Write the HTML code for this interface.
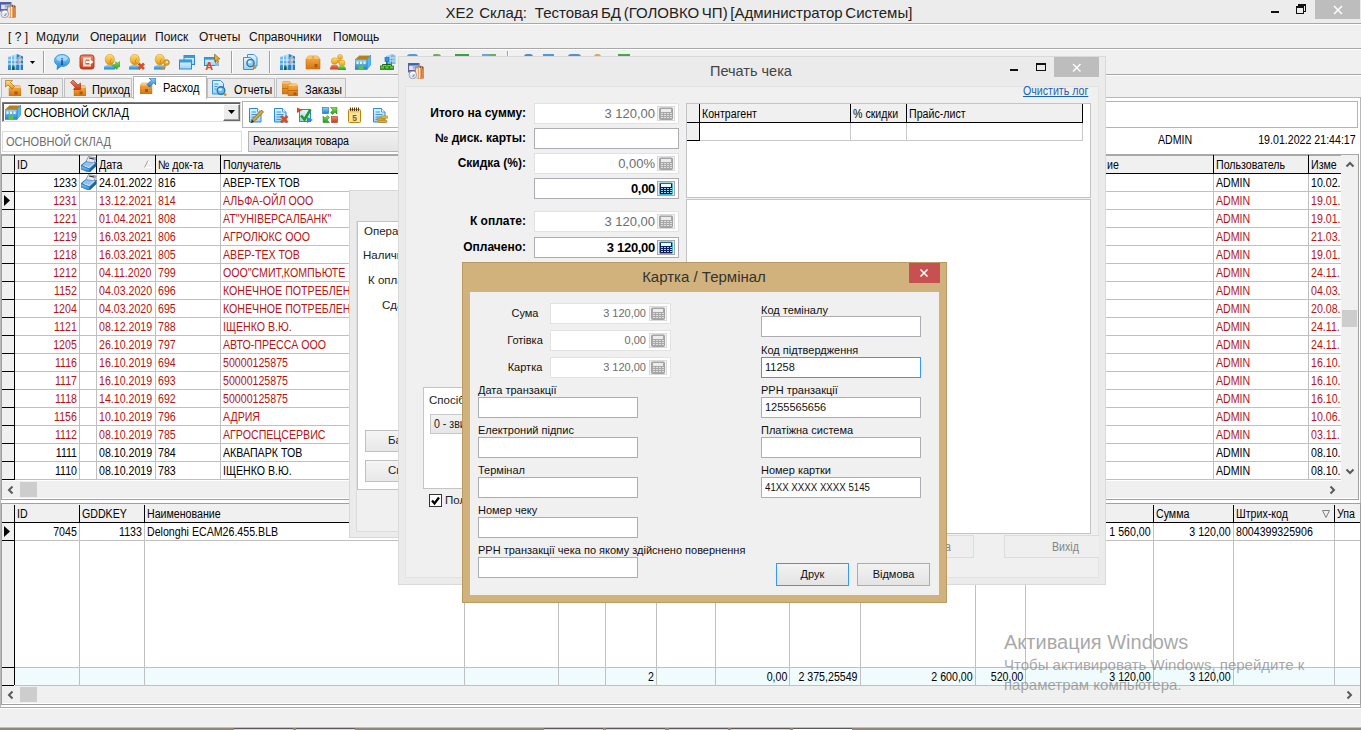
<!DOCTYPE html><html><head><meta charset="utf-8"><title>XE2 Склад</title><style>
*{box-sizing:border-box;margin:0;padding:0}
html,body{width:1361px;height:730px;overflow:hidden;background:#f0f0f0}
body{position:relative;font-family:"Liberation Sans",sans-serif;font-size:12px;color:#000}
.a{position:absolute}
.t{position:absolute;white-space:nowrap;line-height:1}
.g{font-size:12.5px;transform:scaleX(.85);transform-origin:0 50%}
.gr{font-size:12.5px;transform:scaleX(.85);transform-origin:100% 50%;text-align:right}
.red{color:#b41414}
.hl{position:absolute;height:1px}
.vl{position:absolute;width:1px}
.tah{font-size:11px}
.fld{position:absolute;background:#fff;border:1px solid #abadb3}
.fldd{position:absolute;background:#fff;border:1px solid #e3e3e3}
.btn{position:absolute;border:1px solid #acacac;background:linear-gradient(#f2f2f2,#e4e4e4);text-align:center}
</style></head><body>
<svg width="0" height="0" style="position:absolute"><defs><linearGradient id="gB" x1="0" y1="0" x2="0" y2="1"><stop offset="0" stop-color="#8fd2fa"/><stop offset="1" stop-color="#1f7fd0"/></linearGradient><linearGradient id="gL" x1="0" y1="0" x2="0" y2="1"><stop offset="0" stop-color="#e8f6ff"/><stop offset="1" stop-color="#9ad2f6"/></linearGradient><linearGradient id="gO" x1="0" y1="0" x2="0" y2="1"><stop offset="0" stop-color="#f6b04a"/><stop offset="1" stop-color="#d87410"/></linearGradient><linearGradient id="gY" x1="0" y1="0" x2="0" y2="1"><stop offset="0" stop-color="#ffe070"/><stop offset="1" stop-color="#e89a18"/></linearGradient><linearGradient id="gR" x1="0" y1="0" x2="0" y2="1"><stop offset="0" stop-color="#f08a68"/><stop offset="1" stop-color="#c83a1a"/></linearGradient><linearGradient id="gG" x1="0" y1="0" x2="0" y2="1"><stop offset="0" stop-color="#8ade5a"/><stop offset="1" stop-color="#2a9a1a"/></linearGradient></defs></svg>
<div class="a" style="left:0px;top:0px;width:1361px;height:23px;background:#ececec"></div>
<svg class="a" style="left:0px;top:2px" width="16" height="16" viewBox="0 0 16 16"><rect x=".5" y=".5" width="10.500" height="8.500" fill="#b8c4ec" stroke="#5462a8"/><rect x="1" y="1" width="9.500" height="1.500" fill="#4a5cb0"/><rect x="1.500" y="3" width="3" height="5" fill="#e8e4f4"/><rect x="5.500" y="2.500" width="4" height="2.500" fill="#7ac0d8"/><rect x="1" y="7" width="6" height="1.500" fill="#7a5a88"/><path d="M7.500 4.500l5-1.500 3.500 1.500v10.500l-4 1-4.500-1.500z" fill="#e89858" stroke="#a86430" stroke-width=".5"/><path d="M9 5.500v9.500" stroke="#fdeee0" stroke-width="1.600"/><path d="M11.500 5v10.500" stroke="#fff4ea" stroke-width="1.200"/><path d="M13.800 5.500v9.500" stroke="#c87838" stroke-width="1.200"/><path d="M12.500 3v2M14.500 3.500v2" stroke="#504038" stroke-width=".8"/><circle cx="4.800" cy="12" r="3.800" fill="#e4e8ee" stroke="#9098a8" stroke-width=".8"/><path d="M2.500 11q2-2.500 4.500-1" stroke="#fff" stroke-width="1.400" fill="none"/><path d="M4.500 14l2-2.500" stroke="#5a8ad0" stroke-width="1.200"/></svg>
<div class="t " style="left:445px;top:5px;font-size:15px;color:#222;width:468px;text-align:center;white-space:pre;word-spacing:-1.5px">XE2  Склад:   Тестовая БД (ГОЛОВКО ЧП) [Администратор Системы]</div>
<div class="a" style="left:1271px;top:11px;width:8px;height:2px;background:#111"></div>
<div class="a" style="left:1298px;top:4px;width:8px;height:8px;border:1px solid #111;border-top-width:2px"></div>
<div class="a" style="left:1296px;top:6px;width:8px;height:8px;border:1px solid #111;border-top-width:2px;background:#ececec"></div>
<div class="a" style="left:1315px;top:0px;width:45px;height:19px;background:#bdbdbd"></div>
<svg class="a" style="left:1331px;top:3px" width="14" height="14" viewBox="0 0 14 14"><path d="M3 3l8 8M11 3l-8 8" stroke="#fff" stroke-width="1.500"/></svg>
<div class="hl" style="left:0px;top:23px;width:1361px;background:#a8a8a8;height:1px"></div>
<div class="hl" style="left:0px;top:24px;width:1361px;background:#fff;height:1px"></div>
<div class="a" style="left:0px;top:25px;width:1361px;height:23px;background:#f0f0f0"></div>
<div class="t " style="left:8px;top:31px;font-size:12px;color:#111">[ ? ]</div>
<div class="t " style="left:36px;top:31px;font-size:12px;color:#111">Модули</div>
<div class="t " style="left:90px;top:31px;font-size:12px;color:#111">Операции</div>
<div class="t " style="left:155px;top:31px;font-size:12px;color:#111">Поиск</div>
<div class="t " style="left:199px;top:31px;font-size:12px;color:#111">Отчеты</div>
<div class="t " style="left:249px;top:31px;font-size:12px;color:#111">Справочники</div>
<div class="t " style="left:333px;top:31px;font-size:12px;color:#111">Помощь</div>
<div class="hl" style="left:0px;top:48px;width:1361px;background:#a8a8a8;height:1px"></div>
<div class="hl" style="left:0px;top:49px;width:1361px;background:#fff;height:1px"></div>
<div class="a" style="left:0px;top:50px;width:1361px;height:24px;background:#f0f0f0"></div>
<svg class="a" style="left:8px;top:54px" width="16" height="16" viewBox="0 0 16 16"><path d="M0 3L9 0v16H0z" fill="url(#gB)"/><path d="M9 0l6 2.500V16H9z" fill="#2a7cc4"/><path d="M3.500 1.800v14M7 .8v15M0 6h15M0 10h15M12 1.500V16" stroke="#e4f4ff" stroke-width="1.100"/><path d="M9.500 3h2v2.500h-2zM9.500 7h2v2.500h-2zM12.800 4h1.500v1.800h-1.500z" fill="#f09a78"/><rect x="4.200" y="12.500" width="2.400" height="3.500" fill="#1a5a30"/></svg>
<svg class="a" style="left:30px;top:61px" width="5" height="3" viewBox="0 0 5 3"><path d="M0 0h5L2.500 3z" fill="#000"/></svg>
<div class="vl" style="left:43px;top:51px;height:22px;background:#a0a0a0;width:1px"></div>
<div class="vl" style="left:44px;top:51px;height:22px;background:#fff;width:1px"></div>
<svg class="a" style="left:54px;top:54px" width="16" height="16" viewBox="0 0 16 16"><path d="M8 .5C3.500 .5 .5 3.200 .5 6.500c0 2 1.200 3.800 3 4.800L3 15.500l4-3.200c.3 0 .7.100 1 .1 4.500 0 7.500-2.700 7.500-6S12.500.5 8 .5z" fill="url(#gB)" stroke="#2a8ad8" stroke-width=".8"/><ellipse cx="8" cy="4.500" rx="5.500" ry="3" fill="#c8ecff" opacity=".6"/><text x="8" y="10.600" font-family="Liberation Serif,serif" font-size="10.500" font-weight="bold" fill="#0f4fa0" text-anchor="middle">i</text></svg>
<svg class="a" style="left:79px;top:54px" width="16" height="16" viewBox="0 0 16 16"><rect x="1" y="1" width="14" height="14" rx="2.500" fill="url(#gR)" stroke="#b03a1c" stroke-width="1"/><path d="M4 3.500h8v2H6.500v5H12v2H4z" fill="#fbe4da"/><path d="M7 7h3.500V5l4 3-4 3V9H7z" fill="#fff"/></svg>
<svg class="a" style="left:104px;top:54px" width="16" height="16" viewBox="0 0 16 16"><path d="M0 15.500v-3l3-1.500h5l3 1.500v3z" fill="url(#gB)"/><ellipse cx="5.800" cy="5.500" rx="4.600" ry="5.300" fill="url(#gY)" stroke="#c88a10" stroke-width=".5"/><path d="M6.800 5l1.200.3M6.500 6v1.800l-.8.200M5.800 9.200h1.600" stroke="#b87a18" stroke-width=".6" fill="none"/><path d="M2 8q3.500 3 7.500 0q-1 3-3.700 3T2 8z" fill="#e08a10" opacity=".5"/><path d="M16 7.500l-2.500 1.500-2-1.200.3 2.200-4.300 1 5.500 4.500 .5-2 2.500-1z" fill="url(#gG)" stroke="#2a8a1a" stroke-width=".4"/></svg>
<svg class="a" style="left:129px;top:54px" width="16" height="16" viewBox="0 0 16 16"><path d="M0 15.500v-3l3-1.500h5l3 1.500v3z" fill="url(#gB)"/><ellipse cx="5.800" cy="5.500" rx="4.600" ry="5.300" fill="url(#gY)" stroke="#c88a10" stroke-width=".5"/><path d="M6.800 5l1.200.3M6.500 6v1.800l-.8.200M5.800 9.200h1.600" stroke="#b87a18" stroke-width=".6" fill="none"/><path d="M2 8q3.500 3 7.500 0q-1 3-3.700 3T2 8z" fill="#e08a10" opacity=".5"/><path d="M9.500 9.500l5.500 5.500M15 9.500l-5.500 5.500" stroke="#d4502c" stroke-width="2.600"/></svg>
<svg class="a" style="left:154px;top:54px" width="16" height="16" viewBox="0 0 16 16"><path d="M0 15.500v-3l3-1.500h5l3 1.500v3z" fill="url(#gB)"/><ellipse cx="5.800" cy="5.500" rx="4.600" ry="5.300" fill="url(#gY)" stroke="#c88a10" stroke-width=".5"/><path d="M6.800 5l1.200.3M6.500 6v1.800l-.8.200M5.800 9.200h1.600" stroke="#b87a18" stroke-width=".6" fill="none"/><path d="M2 8q3.500 3 7.500 0q-1 3-3.700 3T2 8z" fill="#e08a10" opacity=".5"/><circle cx="12.500" cy="8.500" r="2.800" fill="#e8b040" stroke="#a87810" stroke-width=".8"/><circle cx="13" cy="8" r=".9" fill="#f0f0f0"/><path d="M11 10.500l-4.500 4.500h2.500l1-1.200 1 .2.500-1.500z" fill="#d8a030" stroke="#a87810" stroke-width=".5"/></svg>
<svg class="a" style="left:179px;top:54px" width="16" height="16" viewBox="0 0 16 16"><rect x="5" y="1.500" width="10.500" height="9" fill="url(#gL)" stroke="#2a8ad8"/><rect x="5" y="1.500" width="10.500" height="2.500" fill="#3a9ae0"/><rect x=".5" y="6" width="12" height="9" fill="url(#gL)" stroke="#2a8ad8"/><rect x=".5" y="6" width="12" height="2.500" fill="#3a9ae0"/></svg>
<svg class="a" style="left:204px;top:54px" width="16" height="16" viewBox="0 0 16 16"><rect x=".5" y="3.500" width="11" height="8" fill="url(#gL)" stroke="#2a8ad8"/><rect x=".5" y="3.500" width="11" height="2.200" fill="#3a9ae0"/><path d="M11 9h4v3h-4z" fill="#7cc0f0"/><text x="5.200" y="16" font-family="Liberation Sans,sans-serif" font-size="11" font-weight="bold" fill="#d04a28" text-anchor="middle">A</text><path d="M10.500 0l5.500 5-2.500.2 1.200 2.800-1.500.7-1.300-2.900-1.400 1.700z" fill="#e8b030" stroke="#7a5a0c" stroke-width=".6"/></svg>
<div class="vl" style="left:231px;top:51px;height:22px;background:#a0a0a0;width:1px"></div>
<div class="vl" style="left:232px;top:51px;height:22px;background:#fff;width:1px"></div>
<svg class="a" style="left:242px;top:54px" width="16" height="16" viewBox="0 0 16 16"><path d="M5.500 .5h6.500l3 3V12h-9.500z" fill="url(#gL)" stroke="#3a94d4"/><path d="M1.500 3.500h7l3 3v9h-10z" fill="url(#gL)" stroke="#3a94d4"/><circle cx="8.500" cy="9" r="3.600" fill="#8ccaf2" stroke="#2678b8" stroke-width="1.400"/><ellipse cx="7.800" cy="8" rx="1.800" ry="1.200" fill="#e0f4ff"/><path d="M11.300 11.800l2.500 2.500" stroke="#c89020" stroke-width="2.400"/></svg>
<div class="vl" style="left:269px;top:51px;height:22px;background:#a0a0a0;width:1px"></div>
<div class="vl" style="left:270px;top:51px;height:22px;background:#fff;width:1px"></div>
<svg class="a" style="left:280px;top:54px" width="16" height="16" viewBox="0 0 16 16"><path d="M0 3L9 0v16H0z" fill="url(#gB)"/><path d="M9 0l6 2.500V16H9z" fill="#2a7cc4"/><path d="M3.500 1.800v14M7 .8v15M0 6h15M0 10h15M12 1.500V16" stroke="#e4f4ff" stroke-width="1.100"/><path d="M9.500 3h2v2.500h-2zM9.500 7h2v2.500h-2zM12.800 4h1.500v1.800h-1.500z" fill="#f09a78"/><rect x="4.200" y="12.500" width="2.400" height="3.500" fill="#1a5a30"/></svg>
<svg class="a" style="left:305px;top:54px" width="16" height="16" viewBox="0 0 16 16"><path d="M1 5L3.500 2h9L15 5v10H1z" fill="url(#gO)" stroke="#b8680c" stroke-width=".5"/><path d="M1 5h14L12.500 2h-9z" fill="#f8c470"/><path d="M7 2L6.500 5v3h3V5L9 2z" fill="#e8a040" opacity=".7"/><rect x="9.500" y="10" width="3" height="3.500" fill="#a85a08"/></svg>
<svg class="a" style="left:330px;top:54px" width="16" height="16" viewBox="0 0 16 16"><circle cx="10" cy="3" r="2.500" fill="url(#gY)" stroke="#c88a10" stroke-width=".5"/><path d="M6.500 9q0-3.500 3.500-3.500t3.500 3.500z" fill="#e8a020"/><circle cx="4.500" cy="7" r="3.200" fill="url(#gY)" stroke="#c88a10" stroke-width=".5"/><path d="M0 15.500q0-5 4.500-5t4.500 5z" fill="url(#gR)"/><circle cx="12" cy="9" r="3" fill="url(#gY)" stroke="#c88a10" stroke-width=".5"/><path d="M8 16q0-4.500 4-4.500t4 4.500z" fill="url(#gG)"/></svg>
<svg class="a" style="left:355px;top:54px" width="16" height="16" viewBox="0 0 16 16"><path d="M0 5.500L5 1h11l-4 4.500z" fill="#b8801c"/><path d="M5 1h11l-1 1H4z" fill="#e8c060"/><path d="M12 5.500L16 1v9.500L12 15.500z" fill="#5ab8f0" stroke="#2a7ac0" stroke-width=".5"/><rect x="0" y="5.500" width="12" height="10" fill="url(#gB)" stroke="#2a7ac0" stroke-width=".5"/><path d="M1.500 7.500h2v2.500h-2zM5 7.500h2v2.500H5zM8.500 7.500h2v2.500h-2z" fill="#e6f6ff"/><rect x="3.500" y="11.500" width="5" height="4" fill="#58c838"/></svg>
<svg class="a" style="left:380px;top:54px" width="16" height="16" viewBox="0 0 16 16"><path d="M6 2l6-2v10H6z" fill="url(#gB)"/><path d="M12 0l3.500 1.500V10H12z" fill="#8ab8e0"/><path d="M8 1v9M10 .5V10M6 4h9.500M6 7h9.500" stroke="#e0f2ff" stroke-width=".8"/><rect x="5" y="3.500" width="4" height="4" fill="#3a90e0" stroke="#1a60b0" stroke-width=".6"/><path d="M7 7.500v3M2.500 12.500v-2h9v2M7 10.500v2" stroke="#1a6a1a" fill="none"/><rect x=".5" y="12" width="4" height="3.500" fill="url(#gG)" stroke="#1a7a10" stroke-width=".8"/><rect x="5" y="12" width="4" height="3.500" fill="url(#gG)" stroke="#1a7a10" stroke-width=".8"/><rect x="9.500" y="12" width="4" height="3.500" fill="url(#gG)" stroke="#1a7a10" stroke-width=".8"/></svg>
<div class="a" style="left:407px;top:54px;width:11px;height:3px;background:#3a8ad0;border-radius:5px 5px 0 0;opacity:.85"></div>
<div class="a" style="left:433px;top:54px;width:8px;height:3px;background:#4aa83a;border-radius:2px 4px 0 0;opacity:.85"></div>
<div class="a" style="left:455px;top:54px;width:14px;height:3px;border:2px solid #3aa040;border-bottom:none;background:#e8f8e0"></div>
<div class="a" style="left:482px;top:54px;width:14px;height:3px;background:linear-gradient(90deg,#4a9ad8 50%,#4aa848 50%);opacity:.85"></div>
<div class="vl" style="left:507px;top:51px;height:22px;background:#a0a0a0;width:1px"></div>
<div class="vl" style="left:508px;top:51px;height:22px;background:#fff;width:1px"></div>
<div class="a" style="left:524px;top:54px;width:9px;height:3px;background:#2a7ac8;border-radius:5px 5px 0 0;opacity:.85"></div>
<div class="a" style="left:543px;top:54px;width:11px;height:3px;border:2px solid #4a9ade;border-bottom:none;background:#e8f4fc"></div>
<div class="a" style="left:568px;top:54px;width:13px;height:3px;background:#3a80c0;border-radius:4px 4px 0 0;opacity:.85"></div>
<div class="a" style="left:594px;top:54px;width:7px;height:3px;background:#d8a020;border-radius:3px 3px 0 0;opacity:.85"></div>
<div class="a" style="left:618px;top:54px;width:12px;height:3px;background:#3a9a30;opacity:.9"></div>
<div class="hl" style="left:0px;top:74px;width:1361px;background:#a8a8a8;height:1px"></div>
<div class="hl" style="left:0px;top:75px;width:1361px;background:#fff;height:1px"></div>
<div class="a" style="left:0px;top:97px;width:1361px;height:610px;background:#fff;border:1px solid #b8b8b8;border-bottom:none"></div>
<div class="a" style="left:1px;top:78px;width:62px;height:20px;background:#ebebeb;border:1px solid #c0c0c0"></div>
<svg class="a" style="left:5px;top:80px" width="16" height="16" viewBox="0 0 16 16"><path d="M4 8L6 5.500h8.500L16 8v8H4z" fill="url(#gO)" stroke="#b8680c" stroke-width=".4"/><path d="M4 8h12l-1.500-2.500H6z" fill="#f8c878"/><rect x="9.500" y="11.500" width="3" height="3" fill="#a85a08"/><path d="M.5 .5h7L5.500 2.500l4 4-2.500 2.500-4-4-2.500 2z" fill="url(#gY)" stroke="#9a6008" stroke-width=".6"/></svg>
<div class="t g" style="left:28px;top:83px;font-size:13px">Товар</div>
<div class="a" style="left:64px;top:78px;width:68px;height:20px;background:#ebebeb;border:1px solid #c0c0c0"></div>
<svg class="a" style="left:70px;top:80px" width="16" height="16" viewBox="0 0 16 16"><path d="M4 8L6 5.500h8.500L16 8v8H4z" fill="url(#gO)" stroke="#b8680c" stroke-width=".4"/><path d="M4 8h12l-1.500-2.500H6z" fill="#f8c878"/><rect x="9.500" y="11.500" width="3" height="3" fill="#a85a08"/><path d="M10.500 9.500h-7L5.500 7.500l-5-5L3 0l5 5 2.500-2z" fill="url(#gR)" stroke="#a02a0a" stroke-width=".6"/></svg>
<div class="t g" style="left:92px;top:83px;font-size:13px">Приход</div>
<div class="a" style="left:207px;top:78px;width:68px;height:20px;background:#ebebeb;border:1px solid #c0c0c0"></div>
<svg class="a" style="left:211px;top:80px" width="16" height="16" viewBox="0 0 16 16"><path d="M1.500 .5h8l3 3V14h-11z" fill="url(#gL)" stroke="#3a94d4"/><path d="M3.500 4h4M3.500 6.500h3M3.500 9h2" stroke="#3a94d4" stroke-width="1"/><circle cx="10" cy="10.500" r="3.800" fill="#6cbcf0" stroke="#2678b8" stroke-width="1.400"/><ellipse cx="9.300" cy="9.500" rx="1.800" ry="1.200" fill="#e0f4ff"/><path d="M13 13.500l2 2" stroke="#c89020" stroke-width="2.400"/></svg>
<div class="t g" style="left:234px;top:83px;font-size:13px">Отчеты</div>
<div class="a" style="left:276px;top:78px;width:70px;height:20px;background:#ebebeb;border:1px solid #c0c0c0"></div>
<svg class="a" style="left:282px;top:80px" width="16" height="16" viewBox="0 0 16 16"><path d="M0 3.500L1.500 1.500h6L9 3.500V14H0z" fill="url(#gO)" stroke="#b8680c" stroke-width=".5"/><path d="M0 3.500h9L7.500 1.500h-6z" fill="#f8c878"/><path d="M0 8.500h9" stroke="#b8680c" stroke-width=".8"/><path d="M6 6L7.500 4h7L16 6v10H6z" fill="url(#gO)" stroke="#b8680c" stroke-width=".5"/><path d="M6 6h10l-1.500-2h-7z" fill="#f8c878"/><path d="M6 10.500h10" stroke="#b8680c" stroke-width=".8"/><rect x="11.500" y="12.500" width="3" height="2.500" fill="#a85a08"/></svg>
<div class="t g" style="left:305px;top:83px;font-size:13px">Заказы</div>
<div class="a" style="left:133px;top:76px;width:74px;height:23px;background:#fff;border:1px solid #b4b4b4;border-bottom:none"></div>
<svg class="a" style="left:140px;top:78px" width="16" height="16" viewBox="0 0 16 16"><path d="M0 7.500L2 5h8.500L12 7.500V16H0z" fill="url(#gO)" stroke="#b8680c" stroke-width=".4"/><path d="M0 7.500h12L10.500 5H2z" fill="#f8c878"/><rect x="5" y="11" width="3" height="3" fill="#a85a08"/><path d="M9 0h7v7l-2.200-2.200-4.300 4.300-2.500-2.500 4.300-4.300z" fill="url(#gB)" stroke="#1a5aa0" stroke-width=".6"/></svg>
<div class="t g" style="left:163px;top:81px;font-size:13px">Расход</div>
<div class="a" style="left:2px;top:102px;width:239px;height:20px;background:#fff;border:1px solid #7a7a7a;border-right-color:#e0e0e0;border-bottom-color:#e0e0e0;box-shadow:inset 1px 1px 0 #606060"></div>
<svg class="a" style="left:5px;top:104px" width="16" height="16" viewBox="0 0 16 16"><path d="M0 5.500L5 1h11l-4 4.500z" fill="#b8801c"/><path d="M5 1h11l-1 1H4z" fill="#e8c060"/><path d="M12 5.500L16 1v9.500L12 15.500z" fill="#5ab8f0" stroke="#2a7ac0" stroke-width=".5"/><rect x="0" y="5.500" width="12" height="10" fill="url(#gB)" stroke="#2a7ac0" stroke-width=".5"/><path d="M1.500 7.500h2v2.500h-2zM5 7.500h2v2.500H5zM8.500 7.500h2v2.500h-2z" fill="#e6f6ff"/><rect x="3.500" y="11.500" width="5" height="4" fill="#58c838"/></svg>
<div class="t g" style="left:24px;top:106px;font-size:13px">ОСНОВНОЙ СКЛАД</div>
<div class="a" style="left:223px;top:104px;width:17px;height:17px;background:#ececec;border:1px solid #fff;border-right-color:#6a6a6a;border-bottom-color:#6a6a6a;box-shadow:inset -1px -1px 0 #a0a0a0"></div>
<svg class="a" style="left:228px;top:110px" width="7" height="4" viewBox="0 0 7 4"><path d="M0 0h7L3.500 4z" fill="#000"/></svg>
<div class="a" style="left:242px;top:101px;width:1116px;height:27px;background:#fff;border:1px solid #b4b4b4"></div>
<svg class="a" style="left:248px;top:107px" width="16" height="16" viewBox="0 0 16 16"><path d="M1.500 1.500h8l3.500 3.500v10h-11.500z" fill="url(#gL)" stroke="#2a8ad8"/><path d="M9.500 1.500v3.500h3.500" fill="#fff" stroke="#2a8ad8" stroke-width=".8"/><path d="M3.500 5h4.500M3.500 7.500h7M3.500 10h7M3.500 12.500h5" stroke="#3a9ae0" stroke-width="1.100"/><path d="M3 16l1-3.500L13.500 3l2 2L6 14.500z" fill="#d8a838" stroke="#7a5a10" stroke-width=".7"/><path d="M3 16l1-3.500 2 2z" fill="#403020"/></svg>
<svg class="a" style="left:273px;top:107px" width="16" height="16" viewBox="0 0 16 16"><path d="M1.500 1.500h8l3.500 3.500v10h-11.500z" fill="url(#gL)" stroke="#2a8ad8"/><path d="M9.500 1.500v3.500h3.500" fill="#fff" stroke="#2a8ad8" stroke-width=".8"/><path d="M3.500 5h4.500M3.500 7.500h7M3.500 10h7M3.500 12.500h5" stroke="#3a9ae0" stroke-width="1.100"/><path d="M8 9l6.500 6.500M14.500 9L8 15.500" stroke="#d4502c" stroke-width="2.800"/></svg>
<svg class="a" style="left:297px;top:107px" width="16" height="16" viewBox="0 0 16 16"><rect x="2.500" y="2.500" width="11" height="12" fill="url(#gL)" stroke="#2a8ad8"/><path d="M4 8.500l3.500 4 6-10" stroke="#2a9a1a" stroke-width="2.600" fill="none"/><path d="M0 .5l5.500 2.500L0 6z" fill="#d8482a"/><path d="M10 10l6 3-6 3z" fill="#2a8ad8"/></svg>
<svg class="a" style="left:322px;top:107px" width="16" height="16" viewBox="0 0 16 16"><rect x=".5" y=".5" width="6" height="6" fill="url(#gB)" stroke="#1a6ab8" stroke-width=".6"/><rect x="9.500" y="9.500" width="6" height="6" fill="url(#gR)" stroke="#a83a1a" stroke-width=".6"/><path d="M8.500 .5H15V7l-2-2-2.500 2.500-2-2L11 3z" fill="url(#gG)" stroke="#1a7a10" stroke-width=".5"/><path d="M7.500 15.500H1V9l2 2 2.500-2.500 2 2L5 13z" fill="url(#gG)" stroke="#1a7a10" stroke-width=".5"/></svg>
<svg class="a" style="left:347px;top:107px" width="16" height="16" viewBox="0 0 16 16"><rect x="1.500" y="2.500" width="12" height="13" rx="1" fill="#f8e4a0" stroke="#b8860b"/><rect x="2.500" y="3.500" width="10" height="2" fill="#e8c860"/><path d="M3.500 .5v3.500M5.500 .5v3.500M7.500 .5v3.500M9.500 .5v3.500M11.500 .5v3.500" stroke="#5a3a0a" stroke-width="1"/><text x="7.600" y="13.600" font-family="Liberation Sans,sans-serif" font-size="8.500" font-weight="bold" fill="#8a5a0a" text-anchor="middle">5</text></svg>
<svg class="a" style="left:372px;top:107px" width="16" height="16" viewBox="0 0 16 16"><path d="M1.500 1.500h8l3.500 3.500v10h-11.500z" fill="url(#gL)" stroke="#2a8ad8"/><path d="M9.500 1.500v3.500h3.500" fill="#fff" stroke="#2a8ad8" stroke-width=".8"/><path d="M3.500 5h4.500M3.500 7.500h7M3.500 10h7M3.500 12.500h5" stroke="#3a9ae0" stroke-width="1.100"/><rect x="5" y="11" width="7" height="2.200" rx=".8" fill="#e8b030" stroke="#a87810" stroke-width=".6"/><rect x="9" y="9" width="7" height="2.200" rx=".8" fill="#f0c040" stroke="#a87810" stroke-width=".6"/><rect x="6" y="13.300" width="9" height="2.200" rx=".8" fill="#e8b030" stroke="#a87810" stroke-width=".6"/></svg>
<div class="a" style="left:2px;top:131px;width:240px;height:21px;background:#fff;border:1px solid #dcdcdc"></div>
<div class="t g" style="left:6px;top:135px;font-size:13px;color:#6d6d6d">ОСНОВНОЙ СКЛАД</div>
<div class="a" style="left:248px;top:131px;width:200px;height:21px;background:linear-gradient(#f0f0f0,#e4e4e4);border:1px solid #b4b4b4"></div>
<div class="t g" style="left:253px;top:135px;font-size:12.5px">Реализация товара</div>
<div class="t g" style="left:1158px;top:134px;">ADMIN</div>
<div class="t gr" style="right:5px;top:134px;">19.01.2022 21:44:17</div>
<div class="a" style="left:1px;top:154px;width:1358px;height:346px;background:#fff;border:1px solid #a0a0a0;border-top:2px solid #a8a8a8"></div>
<div class="a" style="left:2px;top:156px;width:1339px;height:17px;background:#f0f0f0"></div>
<div class="vl" style="left:14px;top:155px;height:18px;background:#000;width:1px"></div>
<div class="vl" style="left:14px;top:174px;height:306px;background:#c0c0c0;width:1px"></div>
<div class="vl" style="left:79px;top:155px;height:18px;background:#000;width:1px"></div>
<div class="vl" style="left:79px;top:174px;height:306px;background:#c0c0c0;width:1px"></div>
<div class="vl" style="left:96px;top:155px;height:18px;background:#000;width:1px"></div>
<div class="vl" style="left:96px;top:174px;height:306px;background:#c0c0c0;width:1px"></div>
<div class="vl" style="left:155px;top:155px;height:18px;background:#000;width:1px"></div>
<div class="vl" style="left:155px;top:174px;height:306px;background:#c0c0c0;width:1px"></div>
<div class="vl" style="left:220px;top:155px;height:18px;background:#000;width:1px"></div>
<div class="vl" style="left:220px;top:174px;height:306px;background:#c0c0c0;width:1px"></div>
<div class="vl" style="left:1213px;top:155px;height:18px;background:#000;width:1px"></div>
<div class="vl" style="left:1213px;top:174px;height:306px;background:#c0c0c0;width:1px"></div>
<div class="vl" style="left:1308px;top:155px;height:18px;background:#000;width:1px"></div>
<div class="vl" style="left:1308px;top:174px;height:306px;background:#c0c0c0;width:1px"></div>
<div class="hl" style="left:2px;top:173px;width:1339px;background:#000;height:1px"></div>
<div class="a" style="left:2px;top:174px;width:12px;height:306px;background:#f0f0f0"></div>
<div class="vl" style="left:14px;top:155px;height:325px;background:#000;width:1px"></div>
<div class="hl" style="left:15px;top:191px;width:1326px;background:#c0c0c0;height:1px"></div>
<div class="hl" style="left:2px;top:191px;width:12px;background:#000;height:1px"></div>
<div class="hl" style="left:15px;top:209px;width:1326px;background:#c0c0c0;height:1px"></div>
<div class="hl" style="left:2px;top:209px;width:12px;background:#000;height:1px"></div>
<div class="hl" style="left:15px;top:227px;width:1326px;background:#c0c0c0;height:1px"></div>
<div class="hl" style="left:2px;top:227px;width:12px;background:#000;height:1px"></div>
<div class="hl" style="left:15px;top:245px;width:1326px;background:#c0c0c0;height:1px"></div>
<div class="hl" style="left:2px;top:245px;width:12px;background:#000;height:1px"></div>
<div class="hl" style="left:15px;top:263px;width:1326px;background:#c0c0c0;height:1px"></div>
<div class="hl" style="left:2px;top:263px;width:12px;background:#000;height:1px"></div>
<div class="hl" style="left:15px;top:281px;width:1326px;background:#c0c0c0;height:1px"></div>
<div class="hl" style="left:2px;top:281px;width:12px;background:#000;height:1px"></div>
<div class="hl" style="left:15px;top:299px;width:1326px;background:#c0c0c0;height:1px"></div>
<div class="hl" style="left:2px;top:299px;width:12px;background:#000;height:1px"></div>
<div class="hl" style="left:15px;top:317px;width:1326px;background:#c0c0c0;height:1px"></div>
<div class="hl" style="left:2px;top:317px;width:12px;background:#000;height:1px"></div>
<div class="hl" style="left:15px;top:335px;width:1326px;background:#c0c0c0;height:1px"></div>
<div class="hl" style="left:2px;top:335px;width:12px;background:#000;height:1px"></div>
<div class="hl" style="left:15px;top:353px;width:1326px;background:#c0c0c0;height:1px"></div>
<div class="hl" style="left:2px;top:353px;width:12px;background:#000;height:1px"></div>
<div class="hl" style="left:15px;top:371px;width:1326px;background:#c0c0c0;height:1px"></div>
<div class="hl" style="left:2px;top:371px;width:12px;background:#000;height:1px"></div>
<div class="hl" style="left:15px;top:389px;width:1326px;background:#c0c0c0;height:1px"></div>
<div class="hl" style="left:2px;top:389px;width:12px;background:#000;height:1px"></div>
<div class="hl" style="left:15px;top:407px;width:1326px;background:#c0c0c0;height:1px"></div>
<div class="hl" style="left:2px;top:407px;width:12px;background:#000;height:1px"></div>
<div class="hl" style="left:15px;top:425px;width:1326px;background:#c0c0c0;height:1px"></div>
<div class="hl" style="left:2px;top:425px;width:12px;background:#000;height:1px"></div>
<div class="hl" style="left:15px;top:443px;width:1326px;background:#c0c0c0;height:1px"></div>
<div class="hl" style="left:2px;top:443px;width:12px;background:#000;height:1px"></div>
<div class="hl" style="left:15px;top:461px;width:1326px;background:#c0c0c0;height:1px"></div>
<div class="hl" style="left:2px;top:461px;width:12px;background:#000;height:1px"></div>
<div class="hl" style="left:15px;top:479px;width:1326px;background:#c0c0c0;height:1px"></div>
<div class="hl" style="left:2px;top:479px;width:12px;background:#000;height:1px"></div>
<svg class="a" style="left:4px;top:195px" width="7" height="11" viewBox="0 0 7 11"><path d="M0 0l6 5.500L0 11z" fill="#000"/></svg>
<div class="t g" style="left:17px;top:159px;">ID</div>
<svg class="a" style="left:81px;top:156px" width="16" height="16" viewBox="0 0 16 16"><path d="M0 9.500L6.500 4.500l9 2-7 6.500z" fill="#8cc4f0" stroke="#1a68b8" stroke-width=".9"/><path d="M0 9.500v3.500L8.500 16.500V13z" fill="url(#gB)" stroke="#1a68b8" stroke-width=".7"/><path d="M8.500 13L15.500 6.500v3.500L8.500 16.500z" fill="#1a60a8"/><path d="M5 5.500L7.500 .5l7.500 1.500-2 5z" fill="#e4eaf2" stroke="#6a7a90" stroke-width=".7"/><path d="M8 2l5.500 1.200" stroke="#334" stroke-width="1.200"/><path d="M3.500 10l4.500 1.500 5-4.500" stroke="#d8f0ff" stroke-width=".8" fill="none"/></svg>
<div class="t g" style="left:99px;top:159px;">Дата</div>
<div class="t g" style="left:158px;top:159px;">№ док-та</div>
<div class="t g" style="left:223px;top:159px;">Получатель</div>
<svg class="a" style="left:144px;top:160px" width="8" height="8" viewBox="0 0 8 8"><path d="M.5 7.500L4 .5l3.500 7z" fill="none" stroke="#fff"/><path d="M.5 7.500L4 .5" fill="none" stroke="#a0a0a0"/></svg>
<div class="t g" style="left:1107px;top:159px;">ие</div>
<div class="t g" style="left:1216px;top:159px;">Пользователь</div>
<div class="t g" style="left:1311px;top:159px;">Изме</div>
<div class="t gr" style="right:1284px;top:177px;">1233</div>
<div class="t g" style="left:99px;top:177px;">24.01.2022</div>
<div class="t g" style="left:158px;top:177px;">816</div>
<div class="t g" style="left:223px;top:177px;">АВЕР-ТЕХ ТОВ</div>
<div class="t g" style="left:1216px;top:177px;">ADMIN</div>
<div class="t g" style="left:1311px;top:177px;">10.02.</div>
<div class="t gr red" style="right:1284px;top:195px;">1231</div>
<div class="t g red" style="left:99px;top:195px;">13.12.2021</div>
<div class="t g red" style="left:158px;top:195px;">814</div>
<div class="t g red" style="left:223px;top:195px;">АЛЬФА-ОЙЛ ООО</div>
<div class="t g red" style="left:1216px;top:195px;">ADMIN</div>
<div class="t g red" style="left:1311px;top:195px;">19.01.</div>
<div class="t gr red" style="right:1284px;top:213px;">1221</div>
<div class="t g red" style="left:99px;top:213px;">01.04.2021</div>
<div class="t g red" style="left:158px;top:213px;">808</div>
<div class="t g red" style="left:223px;top:213px;">АТ"УНІВЕРСАЛБАНК"</div>
<div class="t g red" style="left:1216px;top:213px;">ADMIN</div>
<div class="t g red" style="left:1311px;top:213px;">19.01.</div>
<div class="t gr red" style="right:1284px;top:231px;">1219</div>
<div class="t g red" style="left:99px;top:231px;">16.03.2021</div>
<div class="t g red" style="left:158px;top:231px;">806</div>
<div class="t g red" style="left:223px;top:231px;">АГРОЛЮКС ООО</div>
<div class="t g red" style="left:1216px;top:231px;">ADMIN</div>
<div class="t g red" style="left:1311px;top:231px;">21.03.</div>
<div class="t gr red" style="right:1284px;top:249px;">1218</div>
<div class="t g red" style="left:99px;top:249px;">16.03.2021</div>
<div class="t g red" style="left:158px;top:249px;">805</div>
<div class="t g red" style="left:223px;top:249px;">АВЕР-ТЕХ ТОВ</div>
<div class="t g red" style="left:1216px;top:249px;">ADMIN</div>
<div class="t g red" style="left:1311px;top:249px;">19.01.</div>
<div class="t gr red" style="right:1284px;top:267px;">1212</div>
<div class="t g red" style="left:99px;top:267px;">04.11.2020</div>
<div class="t g red" style="left:158px;top:267px;">799</div>
<div class="t g red" style="left:223px;top:267px;">ООО"СМИТ,КОМПЬЮТЕ</div>
<div class="t g red" style="left:1216px;top:267px;">ADMIN</div>
<div class="t g red" style="left:1311px;top:267px;">24.11.</div>
<div class="t gr red" style="right:1284px;top:285px;">1152</div>
<div class="t g red" style="left:99px;top:285px;">04.03.2020</div>
<div class="t g red" style="left:158px;top:285px;">696</div>
<div class="t g red" style="left:223px;top:285px;">КОНЕЧНОЕ ПОТРЕБЛЕН</div>
<div class="t g red" style="left:1216px;top:285px;">ADMIN</div>
<div class="t g red" style="left:1311px;top:285px;">04.03.</div>
<div class="t gr red" style="right:1284px;top:303px;">1204</div>
<div class="t g red" style="left:99px;top:303px;">04.03.2020</div>
<div class="t g red" style="left:158px;top:303px;">695</div>
<div class="t g red" style="left:223px;top:303px;">КОНЕЧНОЕ ПОТРЕБЛЕН</div>
<div class="t g red" style="left:1216px;top:303px;">ADMIN</div>
<div class="t g red" style="left:1311px;top:303px;">20.08.</div>
<div class="t gr red" style="right:1284px;top:321px;">1121</div>
<div class="t g red" style="left:99px;top:321px;">08.12.2019</div>
<div class="t g red" style="left:158px;top:321px;">788</div>
<div class="t g red" style="left:223px;top:321px;">ІЩЕНКО В.Ю.</div>
<div class="t g red" style="left:1216px;top:321px;">ADMIN</div>
<div class="t g red" style="left:1311px;top:321px;">24.11.</div>
<div class="t gr red" style="right:1284px;top:339px;">1205</div>
<div class="t g red" style="left:99px;top:339px;">26.10.2019</div>
<div class="t g red" style="left:158px;top:339px;">797</div>
<div class="t g red" style="left:223px;top:339px;">АВТО-ПРЕССА ООО</div>
<div class="t g red" style="left:1216px;top:339px;">ADMIN</div>
<div class="t g red" style="left:1311px;top:339px;">24.11.</div>
<div class="t gr red" style="right:1284px;top:357px;">1116</div>
<div class="t g red" style="left:99px;top:357px;">16.10.2019</div>
<div class="t g red" style="left:158px;top:357px;">694</div>
<div class="t g red" style="left:223px;top:357px;">50000125875</div>
<div class="t g red" style="left:1216px;top:357px;">ADMIN</div>
<div class="t g red" style="left:1311px;top:357px;">16.10.</div>
<div class="t gr red" style="right:1284px;top:375px;">1117</div>
<div class="t g red" style="left:99px;top:375px;">16.10.2019</div>
<div class="t g red" style="left:158px;top:375px;">693</div>
<div class="t g red" style="left:223px;top:375px;">50000125875</div>
<div class="t g red" style="left:1216px;top:375px;">ADMIN</div>
<div class="t g red" style="left:1311px;top:375px;">16.10.</div>
<div class="t gr red" style="right:1284px;top:393px;">1118</div>
<div class="t g red" style="left:99px;top:393px;">14.10.2019</div>
<div class="t g red" style="left:158px;top:393px;">692</div>
<div class="t g red" style="left:223px;top:393px;">50000125875</div>
<div class="t g red" style="left:1216px;top:393px;">ADMIN</div>
<div class="t g red" style="left:1311px;top:393px;">16.10.</div>
<div class="t gr red" style="right:1284px;top:411px;">1156</div>
<div class="t g red" style="left:99px;top:411px;">10.10.2019</div>
<div class="t g red" style="left:158px;top:411px;">796</div>
<div class="t g red" style="left:223px;top:411px;">АДРИЯ</div>
<div class="t g red" style="left:1216px;top:411px;">ADMIN</div>
<div class="t g red" style="left:1311px;top:411px;">10.06.</div>
<div class="t gr red" style="right:1284px;top:429px;">1112</div>
<div class="t g red" style="left:99px;top:429px;">08.10.2019</div>
<div class="t g red" style="left:158px;top:429px;">785</div>
<div class="t g red" style="left:223px;top:429px;">АГРОСПЕЦСЕРВИС</div>
<div class="t g red" style="left:1216px;top:429px;">ADMIN</div>
<div class="t g red" style="left:1311px;top:429px;">03.11.</div>
<div class="t gr" style="right:1284px;top:447px;">1111</div>
<div class="t g" style="left:99px;top:447px;">08.10.2019</div>
<div class="t g" style="left:158px;top:447px;">784</div>
<div class="t g" style="left:223px;top:447px;">АКВАПАРК ТОВ</div>
<div class="t g" style="left:1216px;top:447px;">ADMIN</div>
<div class="t g" style="left:1311px;top:447px;">08.10.</div>
<div class="t gr" style="right:1284px;top:465px;">1110</div>
<div class="t g" style="left:99px;top:465px;">08.10.2019</div>
<div class="t g" style="left:158px;top:465px;">783</div>
<div class="t g" style="left:223px;top:465px;">ІЩЕНКО В.Ю.</div>
<div class="t g" style="left:1216px;top:465px;">ADMIN</div>
<div class="t g" style="left:1311px;top:465px;">08.10.</div>
<svg class="a" style="left:81px;top:174px" width="16" height="16" viewBox="0 0 16 16"><path d="M0 9.500L6.500 4.500l9 2-7 6.500z" fill="#8cc4f0" stroke="#1a68b8" stroke-width=".9"/><path d="M0 9.500v3.500L8.500 16.500V13z" fill="url(#gB)" stroke="#1a68b8" stroke-width=".7"/><path d="M8.500 13L15.500 6.500v3.500L8.500 16.500z" fill="#1a60a8"/><path d="M5 5.500L7.500 .5l7.500 1.500-2 5z" fill="#e4eaf2" stroke="#6a7a90" stroke-width=".7"/><path d="M8 2l5.500 1.200" stroke="#334" stroke-width="1.200"/><path d="M3.500 10l4.500 1.500 5-4.500" stroke="#d8f0ff" stroke-width=".8" fill="none"/></svg>
<div class="a" style="left:1341px;top:155px;width:17px;height:326px;background:#f0f0f0"></div>
<svg class="a" style="left:1345px;top:161px" width="10" height="8" viewBox="0 0 10 8"><path d="M1.500 5.500L5 2l3.500 3.500" stroke="#5a5a5a" stroke-width="2" fill="none"/></svg>
<svg class="a" style="left:1345px;top:467px" width="10" height="8" viewBox="0 0 10 8"><path d="M1.500 2.500L5 6l3.500-3.500" stroke="#5a5a5a" stroke-width="2" fill="none"/></svg>
<div class="a" style="left:1342px;top:310px;width:15px;height:17px;background:#cdcdcd"></div>
<div class="a" style="left:2px;top:481px;width:1339px;height:17px;background:#f0f0f0"></div>
<div class="a" style="left:1341px;top:481px;width:17px;height:17px;background:#f0f0f0"></div>
<svg class="a" style="left:7px;top:485px" width="8" height="10" viewBox="0 0 8 10"><path d="M5.500 1.500L2 5l3.500 3.500" stroke="#5a5a5a" stroke-width="2" fill="none"/></svg>
<svg class="a" style="left:1328px;top:485px" width="8" height="10" viewBox="0 0 8 10"><path d="M2.500 1.500L6 5l-3.500 3.500" stroke="#5a5a5a" stroke-width="2" fill="none"/></svg>
<div class="a" style="left:20px;top:482px;width:17px;height:15px;background:#cdcdcd"></div>
<div class="a" style="left:1px;top:503px;width:1360px;height:202px;background:#fff;border:1px solid #a0a0a0"></div>
<div class="a" style="left:2px;top:504px;width:1358px;height:18px;background:#f0f0f0"></div>
<div class="a" style="left:2px;top:668px;width:1358px;height:17px;background:#f0fbfd"></div>
<div class="vl" style="left:14px;top:505px;height:18px;background:#000;width:1px"></div>
<div class="vl" style="left:14px;top:523px;height:162px;background:#c0c0c0;width:1px"></div>
<div class="vl" style="left:79px;top:505px;height:18px;background:#000;width:1px"></div>
<div class="vl" style="left:79px;top:523px;height:162px;background:#c0c0c0;width:1px"></div>
<div class="vl" style="left:144px;top:505px;height:18px;background:#000;width:1px"></div>
<div class="vl" style="left:144px;top:523px;height:162px;background:#c0c0c0;width:1px"></div>
<div class="vl" style="left:464px;top:505px;height:18px;background:#000;width:1px"></div>
<div class="vl" style="left:464px;top:523px;height:162px;background:#c0c0c0;width:1px"></div>
<div class="vl" style="left:558px;top:505px;height:18px;background:#000;width:1px"></div>
<div class="vl" style="left:558px;top:523px;height:162px;background:#c0c0c0;width:1px"></div>
<div class="vl" style="left:605px;top:505px;height:18px;background:#000;width:1px"></div>
<div class="vl" style="left:605px;top:523px;height:162px;background:#c0c0c0;width:1px"></div>
<div class="vl" style="left:656px;top:505px;height:18px;background:#000;width:1px"></div>
<div class="vl" style="left:656px;top:523px;height:162px;background:#c0c0c0;width:1px"></div>
<div class="vl" style="left:715px;top:505px;height:18px;background:#000;width:1px"></div>
<div class="vl" style="left:715px;top:523px;height:162px;background:#c0c0c0;width:1px"></div>
<div class="vl" style="left:789px;top:505px;height:18px;background:#000;width:1px"></div>
<div class="vl" style="left:789px;top:523px;height:162px;background:#c0c0c0;width:1px"></div>
<div class="vl" style="left:860px;top:505px;height:18px;background:#000;width:1px"></div>
<div class="vl" style="left:860px;top:523px;height:162px;background:#c0c0c0;width:1px"></div>
<div class="vl" style="left:975px;top:505px;height:18px;background:#000;width:1px"></div>
<div class="vl" style="left:975px;top:523px;height:162px;background:#c0c0c0;width:1px"></div>
<div class="vl" style="left:1025px;top:505px;height:18px;background:#000;width:1px"></div>
<div class="vl" style="left:1025px;top:523px;height:162px;background:#c0c0c0;width:1px"></div>
<div class="vl" style="left:1153px;top:505px;height:18px;background:#000;width:1px"></div>
<div class="vl" style="left:1153px;top:523px;height:162px;background:#c0c0c0;width:1px"></div>
<div class="vl" style="left:1233px;top:505px;height:18px;background:#000;width:1px"></div>
<div class="vl" style="left:1233px;top:523px;height:162px;background:#c0c0c0;width:1px"></div>
<div class="vl" style="left:1334px;top:505px;height:18px;background:#000;width:1px"></div>
<div class="vl" style="left:1334px;top:523px;height:162px;background:#c0c0c0;width:1px"></div>
<div class="hl" style="left:2px;top:522px;width:1358px;background:#000;height:1px"></div>
<div class="a" style="left:2px;top:523px;width:12px;height:162px;background:#f0f0f0"></div>
<div class="vl" style="left:14px;top:505px;height:180px;background:#000;width:1px"></div>
<div class="hl" style="left:2px;top:540px;width:12px;background:#000;height:1px"></div>
<div class="hl" style="left:15px;top:540px;width:1345px;background:#c0c0c0;height:1px"></div>
<div class="hl" style="left:2px;top:667px;width:12px;background:#000;height:1px"></div>
<div class="hl" style="left:15px;top:667px;width:1345px;background:#c0c0c0;height:1px"></div>
<div class="hl" style="left:2px;top:685px;width:12px;background:#000;height:1px"></div>
<div class="hl" style="left:15px;top:685px;width:1345px;background:#c0c0c0;height:1px"></div>
<svg class="a" style="left:4px;top:526px" width="7" height="11" viewBox="0 0 7 11"><path d="M0 0l6 5.500L0 11z" fill="#000"/></svg>
<div class="t g" style="left:17px;top:508px;">ID</div>
<div class="t g" style="left:82px;top:508px;">GDDKEY</div>
<div class="t g" style="left:147px;top:508px;">Наименование</div>
<div class="t g" style="left:1156px;top:508px;">Сумма</div>
<div class="t g" style="left:1236px;top:508px;">Штрих-код</div>
<div class="t g" style="left:1337px;top:508px;">Упа</div>
<svg class="a" style="left:1322px;top:510px" width="8" height="8" viewBox="0 0 8 8"><path d="M.5 .5h7L4 7.500z" fill="none" stroke="#808080"/></svg>
<div class="t gr" style="right:1284px;top:526px;">7045</div>
<div class="t gr" style="right:1219px;top:526px;">1133</div>
<div class="t g" style="left:147px;top:526px;">Delonghi ECAM26.455.BLB</div>
<div class="t gr" style="right:210px;top:526px;">1 560,00</div>
<div class="t gr" style="right:130px;top:526px;">3 120,00</div>
<div class="t g" style="left:1236px;top:526px;">8004399325906</div>
<div class="t gr" style="right:707px;top:671px;">2</div>
<div class="t gr" style="right:574px;top:671px;">0,00</div>
<div class="t gr" style="right:503px;top:671px;">2 375,25549</div>
<div class="t gr" style="right:388px;top:671px;">2 600,00</div>
<div class="t gr" style="right:338px;top:671px;">520,00</div>
<div class="t gr" style="right:210px;top:671px;">3 120,00</div>
<div class="t gr" style="right:130px;top:671px;">3 120,00</div>
<div class="a" style="left:2px;top:686px;width:1358px;height:17px;background:#f0f0f0"></div>
<svg class="a" style="left:7px;top:690px" width="8" height="10" viewBox="0 0 8 10"><path d="M5.500 1.500L2 5l3.500 3.500" stroke="#5a5a5a" stroke-width="2" fill="none"/></svg>
<svg class="a" style="left:1345px;top:690px" width="8" height="10" viewBox="0 0 8 10"><path d="M2.500 1.500L6 5l-3.500 3.500" stroke="#5a5a5a" stroke-width="2" fill="none"/></svg>
<div class="a" style="left:20px;top:687px;width:17px;height:15px;background:#cdcdcd"></div>
<div class="hl" style="left:0px;top:707px;width:1361px;background:#a8a8a8;height:1px"></div>
<div class="hl" style="left:0px;top:708px;width:1361px;background:#fff;height:1px"></div>
<div class="a" style="left:0px;top:727px;width:1361px;height:1px;background:#c4bdb2"></div>
<div class="a" style="left:0px;top:728px;width:1361px;height:2px;background:#948777"></div>
<div class="a" style="left:234px;top:728px;width:59px;height:2px;background:#dcd8d0;border-top:1px solid #5a5a5a"></div>
<div class="a" style="left:296px;top:728px;width:59px;height:2px;background:#dcd8d0;border-top:1px solid #5a5a5a"></div>
<div class="a" style="left:544px;top:728px;width:59px;height:2px;background:#dcd8d0;border-top:1px solid #5a5a5a"></div>
<div class="a" style="left:606px;top:728px;width:59px;height:2px;background:#dcd8d0;border-top:1px solid #5a5a5a"></div>
<div class="a" style="left:669px;top:728px;width:59px;height:2px;background:#dcd8d0;border-top:1px solid #5a5a5a"></div>
<div class="a" style="left:731px;top:728px;width:59px;height:2px;background:#dcd8d0;border-top:1px solid #5a5a5a"></div>
<div class="a" style="left:793px;top:728px;width:59px;height:2px;background:#fff;border-top:1px solid #5a5a5a"></div>
<div class="a" style="left:349px;top:190px;width:60px;height:348px;background:#ebebeb;border:1px solid #d8d8d8"></div>
<div class="a" style="left:356px;top:221px;width:51px;height:311px;background:#f0f0f0;border:1px solid #dcdcdc"></div>
<div class="a" style="left:357px;top:221px;width:50px;height:269px;background:#fff;border:1px solid #c4c4c4"></div>
<div class="t " style="left:364px;top:226px;font-size:11.5px;color:#222">Операц</div>
<div class="t " style="left:363px;top:250px;font-size:11.5px;color:#222">Наличн</div>
<div class="t " style="left:368px;top:275px;font-size:11.5px;color:#222">К опла</div>
<div class="t " style="left:382px;top:300px;font-size:11.5px;color:#222">Сда</div>
<div class="a" style="left:365px;top:430px;width:50px;height:22px;border:1px solid #c0c0c0;background:linear-gradient(#f4f4f4,#e8e8e8)"></div>
<div class="a" style="left:365px;top:460px;width:50px;height:22px;border:1px solid #c0c0c0;background:linear-gradient(#f4f4f4,#e8e8e8)"></div>
<div class="t " style="left:388px;top:435px;font-size:11.5px;color:#222">Ба</div>
<div class="t " style="left:388px;top:465px;font-size:11.5px;color:#222">Сп</div>
<div class="a" style="left:398px;top:56px;width:708px;height:529px;background:#ebebeb;border:1px solid #dadada"></div>
<div class="a" style="left:405px;top:86px;width:694px;height:492px;background:#f0f0f0;border:1px solid #e2e2e2"></div>
<svg class="a" style="left:408px;top:63px" width="16" height="16" viewBox="0 0 16 16"><rect x=".5" y=".5" width="10.500" height="8.500" fill="#b8c4ec" stroke="#5462a8"/><rect x="1" y="1" width="9.500" height="1.500" fill="#4a5cb0"/><rect x="1.500" y="3" width="3" height="5" fill="#e8e4f4"/><rect x="5.500" y="2.500" width="4" height="2.500" fill="#7ac0d8"/><rect x="1" y="7" width="6" height="1.500" fill="#7a5a88"/><path d="M7.500 4.500l5-1.500 3.500 1.500v10.500l-4 1-4.500-1.500z" fill="#e89858" stroke="#a86430" stroke-width=".5"/><path d="M9 5.500v9.500" stroke="#fdeee0" stroke-width="1.600"/><path d="M11.500 5v10.500" stroke="#fff4ea" stroke-width="1.200"/><path d="M13.800 5.500v9.500" stroke="#c87838" stroke-width="1.200"/><path d="M12.500 3v2M14.500 3.500v2" stroke="#504038" stroke-width=".8"/><circle cx="4.800" cy="12" r="3.800" fill="#e4e8ee" stroke="#9098a8" stroke-width=".8"/><path d="M2.500 11q2-2.500 4.500-1" stroke="#fff" stroke-width="1.400" fill="none"/><path d="M4.500 14l2-2.500" stroke="#5a8ad0" stroke-width="1.200"/></svg>
<div class="t " style="left:710px;top:64px;font-size:14.5px;color:#444">Печать чека</div>
<div class="a" style="left:1010px;top:69px;width:8px;height:2px;background:#111"></div>
<div class="a" style="left:1036px;top:63px;width:10px;height:8px;border:1px solid #111;border-top-width:2px"></div>
<div class="a" style="left:1054px;top:57px;width:45px;height:20px;background:#bdbdbd"></div>
<svg class="a" style="left:1070px;top:61px" width="14" height="14" viewBox="0 0 14 14"><path d="M3 3l7.500 7.500M10.500 3L3 10.500" stroke="#fff" stroke-width="1.400"/></svg>
<div class="t g" style="left:1023px;top:85px;color:#1a62b8;text-decoration:underline;font-size:12.5px">Очистить лог</div>
<div class="t gr" style="right:835px;top:107px;font-weight:bold;font-size:12px;transform:none">Итого на сумму:</div>
<div class="a" style="left:534px;top:103px;width:145px;height:21px;background:#fff;border:1px solid #e2e2e2"></div>
<svg class="a" style="left:657px;top:106px" width="18" height="15" viewBox="0 0 18 15"><rect x=".5" y=".5" width="17" height="14" fill="#f2f2f2" stroke="#dadada"/><rect x="2.500" y="2" width="13" height="11.500" rx="1" fill="#a8a8a8" stroke="#a2a2a2" stroke-width="1"/><rect x="4" y="3" width="10" height="3" fill="#ececec"/><rect x="4" y="7" width="2" height="1" fill="#dedede"/><rect x="4" y="9" width="2" height="1" fill="#dedede"/><rect x="4" y="11" width="2" height="1" fill="#dedede"/><rect x="7" y="7" width="2" height="1" fill="#dedede"/><rect x="7" y="9" width="2" height="1" fill="#dedede"/><rect x="7" y="11" width="2" height="1" fill="#dedede"/><rect x="10" y="7" width="2" height="1" fill="#dedede"/><rect x="10" y="9" width="2" height="1" fill="#dedede"/><rect x="10" y="11" width="2" height="1" fill="#dedede"/><rect x="13" y="7" width="2" height="1" fill="#dedede"/><rect x="13" y="9" width="2" height="1" fill="#dedede"/><rect x="13" y="11" width="2" height="1" fill="#dedede"/></svg>
<div class="t " style="right:706px;top:107px;font-size:13px;color:#6d6d6d">3 120,00</div>
<div class="t gr" style="right:835px;top:132px;font-weight:bold;font-size:12px;transform:none">№ диск. карты:</div>
<div class="a" style="left:534px;top:128px;width:145px;height:21px;background:#fff;border:1px solid #abadb3"></div>
<div class="t gr" style="right:835px;top:157px;font-weight:bold;font-size:12px;transform:none">Скидка (%):</div>
<div class="a" style="left:534px;top:153px;width:145px;height:21px;background:#fff;border:1px solid #e2e2e2"></div>
<svg class="a" style="left:657px;top:156px" width="18" height="15" viewBox="0 0 18 15"><rect x=".5" y=".5" width="17" height="14" fill="#f2f2f2" stroke="#dadada"/><rect x="2.500" y="2" width="13" height="11.500" rx="1" fill="#a8a8a8" stroke="#a2a2a2" stroke-width="1"/><rect x="4" y="3" width="10" height="3" fill="#ececec"/><rect x="4" y="7" width="2" height="1" fill="#dedede"/><rect x="4" y="9" width="2" height="1" fill="#dedede"/><rect x="4" y="11" width="2" height="1" fill="#dedede"/><rect x="7" y="7" width="2" height="1" fill="#dedede"/><rect x="7" y="9" width="2" height="1" fill="#dedede"/><rect x="7" y="11" width="2" height="1" fill="#dedede"/><rect x="10" y="7" width="2" height="1" fill="#dedede"/><rect x="10" y="9" width="2" height="1" fill="#dedede"/><rect x="10" y="11" width="2" height="1" fill="#dedede"/><rect x="13" y="7" width="2" height="1" fill="#dedede"/><rect x="13" y="9" width="2" height="1" fill="#dedede"/><rect x="13" y="11" width="2" height="1" fill="#dedede"/></svg>
<div class="t " style="right:706px;top:157px;font-size:13px;color:#6d6d6d">0,00%</div>
<div class="a" style="left:534px;top:178px;width:145px;height:21px;background:#fff;border:1px solid #abadb3"></div>
<svg class="a" style="left:657px;top:181px" width="18" height="15" viewBox="0 0 18 15"><rect x=".5" y=".5" width="17" height="14" fill="#ececec" stroke="#a6a6a6"/><rect x="2.500" y="2" width="13" height="11.500" rx="1" fill="#0a1e5c" stroke="#3fb8cc" stroke-width="1"/><rect x="4" y="3" width="10" height="3" fill="#f4fbff"/><rect x="4" y="7" width="2" height="1" fill="#9fd8ec"/><rect x="4" y="9" width="2" height="1" fill="#9fd8ec"/><rect x="4" y="11" width="2" height="1" fill="#9fd8ec"/><rect x="7" y="7" width="2" height="1" fill="#9fd8ec"/><rect x="7" y="9" width="2" height="1" fill="#9fd8ec"/><rect x="7" y="11" width="2" height="1" fill="#9fd8ec"/><rect x="10" y="7" width="2" height="1" fill="#9fd8ec"/><rect x="10" y="9" width="2" height="1" fill="#9fd8ec"/><rect x="10" y="11" width="2" height="1" fill="#9fd8ec"/><rect x="13" y="7" width="2" height="1" fill="#9fd8ec"/><rect x="13" y="9" width="2" height="1" fill="#9fd8ec"/><rect x="13" y="11" width="2" height="1" fill="#9fd8ec"/></svg>
<div class="t " style="right:706px;top:182px;font-size:13px;font-weight:bold;color:#000;letter-spacing:-.3px">0,00</div>
<div class="t gr" style="right:835px;top:215px;font-weight:bold;font-size:12px;transform:none">К оплате:</div>
<div class="a" style="left:534px;top:211px;width:145px;height:21px;background:#fff;border:1px solid #e2e2e2"></div>
<svg class="a" style="left:657px;top:214px" width="18" height="15" viewBox="0 0 18 15"><rect x=".5" y=".5" width="17" height="14" fill="#f2f2f2" stroke="#dadada"/><rect x="2.500" y="2" width="13" height="11.500" rx="1" fill="#a8a8a8" stroke="#a2a2a2" stroke-width="1"/><rect x="4" y="3" width="10" height="3" fill="#ececec"/><rect x="4" y="7" width="2" height="1" fill="#dedede"/><rect x="4" y="9" width="2" height="1" fill="#dedede"/><rect x="4" y="11" width="2" height="1" fill="#dedede"/><rect x="7" y="7" width="2" height="1" fill="#dedede"/><rect x="7" y="9" width="2" height="1" fill="#dedede"/><rect x="7" y="11" width="2" height="1" fill="#dedede"/><rect x="10" y="7" width="2" height="1" fill="#dedede"/><rect x="10" y="9" width="2" height="1" fill="#dedede"/><rect x="10" y="11" width="2" height="1" fill="#dedede"/><rect x="13" y="7" width="2" height="1" fill="#dedede"/><rect x="13" y="9" width="2" height="1" fill="#dedede"/><rect x="13" y="11" width="2" height="1" fill="#dedede"/></svg>
<div class="t " style="right:706px;top:215px;font-size:13px;color:#6d6d6d">3 120,00</div>
<div class="t gr" style="right:835px;top:241px;font-weight:bold;font-size:12px;transform:none">Оплачено:</div>
<div class="a" style="left:534px;top:237px;width:145px;height:21px;background:#fff;border:1px solid #abadb3"></div>
<svg class="a" style="left:657px;top:240px" width="18" height="15" viewBox="0 0 18 15"><rect x=".5" y=".5" width="17" height="14" fill="#ececec" stroke="#a6a6a6"/><rect x="2.500" y="2" width="13" height="11.500" rx="1" fill="#0a1e5c" stroke="#3fb8cc" stroke-width="1"/><rect x="4" y="3" width="10" height="3" fill="#f4fbff"/><rect x="4" y="7" width="2" height="1" fill="#9fd8ec"/><rect x="4" y="9" width="2" height="1" fill="#9fd8ec"/><rect x="4" y="11" width="2" height="1" fill="#9fd8ec"/><rect x="7" y="7" width="2" height="1" fill="#9fd8ec"/><rect x="7" y="9" width="2" height="1" fill="#9fd8ec"/><rect x="7" y="11" width="2" height="1" fill="#9fd8ec"/><rect x="10" y="7" width="2" height="1" fill="#9fd8ec"/><rect x="10" y="9" width="2" height="1" fill="#9fd8ec"/><rect x="10" y="11" width="2" height="1" fill="#9fd8ec"/><rect x="13" y="7" width="2" height="1" fill="#9fd8ec"/><rect x="13" y="9" width="2" height="1" fill="#9fd8ec"/><rect x="13" y="11" width="2" height="1" fill="#9fd8ec"/></svg>
<div class="t " style="right:706px;top:241px;font-size:13px;font-weight:bold;color:#000;letter-spacing:-.3px">3 120,00</div>
<div class="a" style="left:423px;top:387px;width:120px;height:102px;background:#fff;border:1px solid #c4c4c4"></div>
<div class="t " style="left:429px;top:395px;font-size:11.5px;color:#222">Спосіб</div>
<div class="a" style="left:430px;top:414px;width:100px;height:20px;border:1px solid #c8c8c8;background:linear-gradient(#f2f2f2,#e6e6e6)"></div>
<div class="t g" style="left:434px;top:418px;font-size:12.5px;color:#222">0 - зви</div>
<div class="a" style="left:429px;top:494px;width:13px;height:13px;background:#fff;border:1px solid #333"></div>
<svg class="a" style="left:430px;top:495px" width="11" height="11" viewBox="0 0 11 11"><path d="M2 5.500l2.500 3L9 2.500" stroke="#000" stroke-width="2.300" fill="none"/></svg>
<div class="t " style="left:445px;top:495px;font-size:11.5px;color:#222">Пол</div>
<div class="a" style="left:686px;top:103px;width:405px;height:95px;background:#fff;border:1px solid #c4c4c4"></div>
<div class="a" style="left:687px;top:104px;width:396px;height:18px;background:#f0f0f0"></div>
<div class="hl" style="left:687px;top:122px;width:396px;background:#000;height:1px"></div>
<div class="vl" style="left:699px;top:104px;height:19px;background:#000;width:1px"></div>
<div class="vl" style="left:850px;top:104px;height:19px;background:#000;width:1px"></div>
<div class="vl" style="left:906px;top:104px;height:19px;background:#000;width:1px"></div>
<div class="vl" style="left:1082px;top:104px;height:19px;background:#000;width:1px"></div>
<div class="vl" style="left:850px;top:123px;height:18px;background:#c8c8c8;width:1px"></div>
<div class="vl" style="left:906px;top:123px;height:18px;background:#c8c8c8;width:1px"></div>
<div class="vl" style="left:1082px;top:123px;height:18px;background:#c8c8c8;width:1px"></div>
<div class="hl" style="left:700px;top:140px;width:383px;background:#c8c8c8;height:1px"></div>
<div class="a" style="left:687px;top:123px;width:12px;height:18px;background:#f0f0f0"></div>
<div class="vl" style="left:699px;top:123px;height:18px;background:#000;width:1px"></div>
<div class="hl" style="left:687px;top:140px;width:13px;background:#000;height:1px"></div>
<div class="t g" style="left:702px;top:108px;">Контрагент</div>
<div class="t g" style="left:853px;top:108px;">% скидки</div>
<div class="t g" style="left:909px;top:108px;">Прайс-лист</div>
<div class="a" style="left:686px;top:199px;width:405px;height:335px;background:#fff;border:1px solid #c4c4c4"></div>
<div class="a" style="left:880px;top:535px;width:94px;height:23px;border:1px solid #dcdcdc;background:#efefef"></div>
<div class="a" style="left:1004px;top:535px;width:95px;height:23px;border:1px solid #dcdcdc;background:#efefef;border-right:none"></div>
<div class="t g" style="left:1052px;top:541px;color:#838383">Вихід</div>
<div class="t g" style="left:945px;top:541px;color:#838383">а</div>
<div class="a" style="left:462px;top:262px;width:485px;height:341px;background:#d1b27c;border:1px solid #b89a62"></div>
<div class="a" style="left:470px;top:292px;width:469px;height:303px;background:#f0f0f0"></div>
<div class="t " style="left:554px;top:269px;font-size:15px;color:#333;width:300px;text-align:center">Картка / Термінал</div>
<div class="a" style="left:909px;top:263px;width:31px;height:20px;background:#c75050"></div>
<svg class="a" style="left:917px;top:266px" width="14" height="14" viewBox="0 0 14 14"><path d="M3.500 3.500l7 7M10.500 3.500l-7 7" stroke="#fff" stroke-width="1.500"/></svg>
<div class="t tah" style="left:485px;top:308px;color:#111;width:80px;text-align:center">Сума</div>
<div class="a" style="left:550px;top:303px;width:121px;height:21px;background:#fff;border:1px solid #e2e2e2"></div>
<svg class="a" style="left:649px;top:306px" width="18" height="15" viewBox="0 0 18 15"><rect x=".5" y=".5" width="17" height="14" fill="#f2f2f2" stroke="#dadada"/><rect x="2.500" y="2" width="13" height="11.500" rx="1" fill="#a8a8a8" stroke="#a2a2a2" stroke-width="1"/><rect x="4" y="3" width="10" height="3" fill="#ececec"/><rect x="4" y="7" width="2" height="1" fill="#dedede"/><rect x="4" y="9" width="2" height="1" fill="#dedede"/><rect x="4" y="11" width="2" height="1" fill="#dedede"/><rect x="7" y="7" width="2" height="1" fill="#dedede"/><rect x="7" y="9" width="2" height="1" fill="#dedede"/><rect x="7" y="11" width="2" height="1" fill="#dedede"/><rect x="10" y="7" width="2" height="1" fill="#dedede"/><rect x="10" y="9" width="2" height="1" fill="#dedede"/><rect x="10" y="11" width="2" height="1" fill="#dedede"/><rect x="13" y="7" width="2" height="1" fill="#dedede"/><rect x="13" y="9" width="2" height="1" fill="#dedede"/><rect x="13" y="11" width="2" height="1" fill="#dedede"/></svg>
<div class="t tah" style="right:715px;top:308px;color:#6d6d6d">3 120,00</div>
<div class="t tah" style="left:485px;top:335px;color:#111;width:80px;text-align:center">Готівка</div>
<div class="a" style="left:550px;top:330px;width:121px;height:21px;background:#fff;border:1px solid #e2e2e2"></div>
<svg class="a" style="left:649px;top:333px" width="18" height="15" viewBox="0 0 18 15"><rect x=".5" y=".5" width="17" height="14" fill="#f2f2f2" stroke="#dadada"/><rect x="2.500" y="2" width="13" height="11.500" rx="1" fill="#a8a8a8" stroke="#a2a2a2" stroke-width="1"/><rect x="4" y="3" width="10" height="3" fill="#ececec"/><rect x="4" y="7" width="2" height="1" fill="#dedede"/><rect x="4" y="9" width="2" height="1" fill="#dedede"/><rect x="4" y="11" width="2" height="1" fill="#dedede"/><rect x="7" y="7" width="2" height="1" fill="#dedede"/><rect x="7" y="9" width="2" height="1" fill="#dedede"/><rect x="7" y="11" width="2" height="1" fill="#dedede"/><rect x="10" y="7" width="2" height="1" fill="#dedede"/><rect x="10" y="9" width="2" height="1" fill="#dedede"/><rect x="10" y="11" width="2" height="1" fill="#dedede"/><rect x="13" y="7" width="2" height="1" fill="#dedede"/><rect x="13" y="9" width="2" height="1" fill="#dedede"/><rect x="13" y="11" width="2" height="1" fill="#dedede"/></svg>
<div class="t tah" style="right:715px;top:335px;color:#6d6d6d">0,00</div>
<div class="t tah" style="left:485px;top:362px;color:#111;width:80px;text-align:center">Картка</div>
<div class="a" style="left:550px;top:357px;width:121px;height:21px;background:#fff;border:1px solid #e2e2e2"></div>
<svg class="a" style="left:649px;top:360px" width="18" height="15" viewBox="0 0 18 15"><rect x=".5" y=".5" width="17" height="14" fill="#f2f2f2" stroke="#dadada"/><rect x="2.500" y="2" width="13" height="11.500" rx="1" fill="#a8a8a8" stroke="#a2a2a2" stroke-width="1"/><rect x="4" y="3" width="10" height="3" fill="#ececec"/><rect x="4" y="7" width="2" height="1" fill="#dedede"/><rect x="4" y="9" width="2" height="1" fill="#dedede"/><rect x="4" y="11" width="2" height="1" fill="#dedede"/><rect x="7" y="7" width="2" height="1" fill="#dedede"/><rect x="7" y="9" width="2" height="1" fill="#dedede"/><rect x="7" y="11" width="2" height="1" fill="#dedede"/><rect x="10" y="7" width="2" height="1" fill="#dedede"/><rect x="10" y="9" width="2" height="1" fill="#dedede"/><rect x="10" y="11" width="2" height="1" fill="#dedede"/><rect x="13" y="7" width="2" height="1" fill="#dedede"/><rect x="13" y="9" width="2" height="1" fill="#dedede"/><rect x="13" y="11" width="2" height="1" fill="#dedede"/></svg>
<div class="t tah" style="right:715px;top:362px;color:#6d6d6d">3 120,00</div>
<div class="t tah" style="left:478px;top:385px;color:#111">Дата транзакції</div>
<div class="a" style="left:478px;top:397px;width:160px;height:21px;background:#fff;border:1px solid #abadb3"></div>
<div class="t tah" style="left:478px;top:425px;color:#111">Електроний підпис</div>
<div class="a" style="left:478px;top:437px;width:160px;height:21px;background:#fff;border:1px solid #abadb3"></div>
<div class="t tah" style="left:478px;top:465px;color:#111">Термінал</div>
<div class="a" style="left:478px;top:477px;width:160px;height:21px;background:#fff;border:1px solid #abadb3"></div>
<div class="t tah" style="left:478px;top:505px;color:#111">Номер чеку</div>
<div class="a" style="left:478px;top:517px;width:160px;height:21px;background:#fff;border:1px solid #abadb3"></div>
<div class="t tah" style="left:478px;top:545px;color:#111">РРН транзакції чека по якому здійснено повернення</div>
<div class="a" style="left:478px;top:557px;width:160px;height:21px;background:#fff;border:1px solid #abadb3"></div>
<div class="t tah" style="left:761px;top:305px;color:#111">Код теміналу</div>
<div class="a" style="left:761px;top:316px;width:160px;height:21px;background:#fff;border:1px solid #abadb3"></div>
<div class="t tah" style="left:761px;top:345px;color:#111">Код підтвердження</div>
<div class="a" style="left:761px;top:357px;width:160px;height:21px;background:#fff;border:1px solid #3399ff"></div>
<div class="t tah" style="left:765px;top:362px;color:#111;transform-origin:0 50%;">11258</div>
<div class="t tah" style="left:761px;top:385px;color:#111">РРН транзакції</div>
<div class="a" style="left:761px;top:397px;width:160px;height:21px;background:#fff;border:1px solid #abadb3"></div>
<div class="t tah" style="left:765px;top:402px;color:#111;transform-origin:0 50%;">1255565656</div>
<div class="t tah" style="left:761px;top:425px;color:#111">Платіжна система</div>
<div class="a" style="left:761px;top:437px;width:160px;height:21px;background:#fff;border:1px solid #abadb3"></div>
<div class="t tah" style="left:761px;top:465px;color:#111">Номер картки</div>
<div class="a" style="left:761px;top:477px;width:160px;height:21px;background:#fff;border:1px solid #abadb3"></div>
<div class="t tah" style="left:765px;top:482px;color:#111;transform-origin:0 50%;transform:scaleX(.88)">41ХХ ХХХХ ХХХХ 5145</div>
<div class="a" style="left:776px;top:563px;width:73px;height:23px;border:1px solid #3399ff;background:linear-gradient(#f2f2f2,#e4e4e4)"></div>
<div class="a" style="left:857px;top:563px;width:73px;height:23px;border:1px solid #acacac;background:linear-gradient(#f2f2f2,#e4e4e4)"></div>
<div class="t tah" style="left:776px;top:569px;width:73px;text-align:center;color:#111">Друк</div>
<div class="t tah" style="left:857px;top:569px;width:73px;text-align:center;color:#111">Відмова</div>
<div class="t " style="left:1004px;top:632px;font-size:20px;color:rgba(125,125,125,.68)">Активация Windows</div>
<div class="t " style="left:1004px;top:657px;font-size:15px;color:rgba(125,125,125,.68)">Чтобы активировать Windows, перейдите к</div>
<div class="t " style="left:1004px;top:677px;font-size:15px;color:rgba(125,125,125,.68)">параметрам компьютера.</div>
</body></html>
